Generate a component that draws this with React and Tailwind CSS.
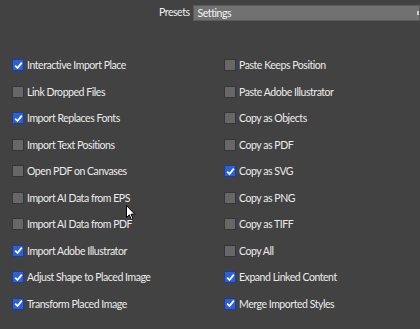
import { useState } from 'react';

const left = [
  ['Interactive Import Place', true],
  ['Link Dropped Files', false],
  ['Import Replaces Fonts', true],
  ['Import Text Positions', false],
  ['Open PDF on Canvases', false],
  ['Import AI Data from EPS', false],
  ['Import AI Data from PDF', false],
  ['Import Adobe Illustrator', true],
  ['Adjust Shape to Placed Image', true],
  ['Transform Placed Image', true],
];

const right = [
  ['Paste Keeps Position', false],
  ['Paste Adobe Illustrator', false],
  ['Copy as Objects', false],
  ['Copy as PDF', false],
  ['Copy as SVG', true],
  ['Copy as PNG', false],
  ['Copy as TIFF', false],
  ['Copy All', false],
  ['Expand Linked Content', true],
  ['Merge Imported Styles', true],
];

function Check({ label, initial }) {
  const [on, setOn] = useState(initial);
  return (
    <label className="flex items-center h-[26.5px] gap-[3px] cursor-default select-none" onClick={() => setOn(!on)}>
      {on ? (
        <span className="w-[12px] h-[12px] flex items-center justify-center bg-[#2c5fd8] border border-[#1f3f8c]">
          <svg viewBox="0 0 10 10" className="w-[9px] h-[9px]">
            <path d="M1.3 5.2 L3.9 7.8 L8.7 1.8" fill="none" stroke="#fff" strokeWidth="2" />
          </svg>
        </span>
      ) : (
        <span className="w-[12px] h-[12px] bg-[#676767] border border-[#353535]" />
      )}
      <span className="text-[10.5px] tracking-[-0.45px] text-[#ececec] leading-none">{label}</span>
    </label>
  );
}

export default function App() {
  return (
    <div className="relative w-[420px] h-[329px] bg-[#424242] overflow-hidden" style={{ fontFamily: 'Lato, "Noto Sans", sans-serif' }}>
      {/* Presets header */}
      <div className="flex items-center pt-[5px] pl-[159px] gap-[3px]">
        <span className="text-[10.5px] tracking-[-0.45px] text-[#f0f0f0]">Presets</span>
        <div className="flex-1 h-[16px] bg-[#717171] border border-[#5a5a5a] flex items-center justify-between pl-[4px]">
          <span className="text-[10.5px] tracking-[-0.45px] text-[#f4f4f4] leading-none">Settings</span>
          <span className="w-[2px] h-[4px] bg-[#d0d0d0]" />
        </div>
      </div>

      {/* Options grid */}
      <div className="grid grid-cols-[212px_1fr] pl-[12px] pt-[31px]">
        <div className="flex flex-col">
          {left.map(([l, c]) => <Check key={l} label={l} initial={c} />)}
        </div>
        <div className="flex flex-col">
          {right.map(([l, c]) => <Check key={l} label={l} initial={c} />)}
        </div>
      </div>

      {/* mouse cursor */}
      <svg className="absolute left-[126px] top-[205px]" width="10" height="16" viewBox="0 0 10 16">
        <path d="M0.5 0.5 L0.5 12.5 L3.3 9.8 L5.3 14.5 L7 13.7 L5 9.2 L8.8 9.2 Z" fill="#fff" stroke="#000" strokeWidth="1" />
      </svg>
    </div>
  );
}
